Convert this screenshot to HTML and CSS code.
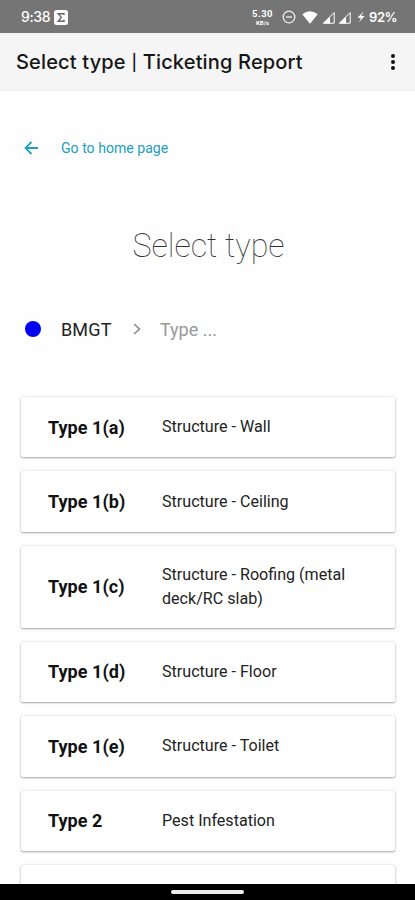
FILE: index.html
```html
<!DOCTYPE html>
<html lang="en">
<head>
<meta charset="utf-8">
<title>Select type | Ticketing Report</title>
<link rel="stylesheet" href="styles.css">
</head>
<body>
<header class="status">
  <span class="clock">9:38</span>
  <svg class="sigma" width="14" height="15" viewBox="0 0 14 15"><rect width="14" height="15" rx="2.5" fill="#fff"/><path d="M10 5V3.7H4.2L7.3 7.4L4.2 11.2H10V9.8" fill="none" stroke="#666" stroke-width="1.4"/></svg>
  <span class="speed"><b>5.30</b><small>KB/s</small></span>
  <svg class="dnd" width="14" height="14" viewBox="0 0 14 14" fill="none" stroke="#eee" stroke-width="1.3"><circle cx="7" cy="7" r="5.8"/><path d="M4 7h6"/></svg>
  <svg class="wifi" width="16" height="13" viewBox="0 0 16 13"><path d="M.3 3.3Q8-2.8 15.7 3.3L8 12.8Z" fill="#fff"/></svg>
  <svg class="signal" width="13" height="13" viewBox="0 0 13 13"><path d="M1.5 12.2L12.2 1.5V12.2Z" fill="none" stroke="#fff"/><path d="M1 12.5L8 5.5V12.5Z" fill="#fff"/></svg>
  <svg class="signal" width="13" height="13" viewBox="0 0 13 13"><path d="M1.5 12.2L12.2 1.5V12.2Z" fill="none" stroke="#fff"/><path d="M1 12.5L8 5.5V12.5Z" fill="#fff"/></svg>
  <svg class="bolt" width="8" height="12" viewBox="0 0 8 12"><path d="M6.5.5L.5 6.8L4 7L1.8 11.5L7.7 5.1L4.2 4.9Z" fill="#fff"/></svg>
  <span class="battery">92%</span>
</header>
<div class="appbar">
  <h1>Select type <span class="bar">|</span> Ticketing Report</h1>
  <svg width="6" height="18" viewBox="0 0 6 18" fill="#111"><circle cx="3" cy="3" r="2"/><circle cx="3" cy="9" r="2"/><circle cx="3" cy="15" r="2"/></svg>
</div>
<main>
  <a class="back">
    <svg width="15" height="14" viewBox="0 0 15 14" fill="none" stroke="#209fbd" stroke-width="1.8"><path d="M14 7H2M7.5 1L1.5 7L7.5 13"/></svg>
    <span>Go to home page</span>
  </a>
  <h2>Select type</h2>
  <nav class="crumbs">
    <i class="dot"></i>
    <span class="group">BMGT</span>
    <svg width="8" height="12" viewBox="0 0 8 12" fill="none" stroke="#888" stroke-width="1.6"><path d="M1 1L6.5 6L1 11"/></svg>
    <span class="current">Type ...</span>
  </nav>
  <section class="list">
    <article class="card"><b>Type 1(a)</b><p>Structure - Wall</p></article>
    <article class="card"><b>Type 1(b)</b><p>Structure - Ceiling</p></article>
    <article class="card tall"><b>Type 1(c)</b><p>Structure - Roofing (metal deck/RC slab)</p></article>
    <article class="card"><b>Type 1(d)</b><p>Structure - Floor</p></article>
    <article class="card"><b>Type 1(e)</b><p>Structure - Toilet</p></article>
    <article class="card"><b>Type 2</b><p>Pest Infestation</p></article>
    <article class="card"></article>
  </section>
</main>
<footer class="navbar"><i></i></footer>
</body>
</html>
```
FILE: styles.css
```css
* { box-sizing: border-box; }
body {
  margin: 0;
  width: 415px;
  height: 900px;
  overflow: hidden;
  display: flex;
  flex-direction: column;
  background: #fefefe;
  color: #222;
  font-family: Roboto, sans-serif;
}
h1, h2, p { margin: 0; font-weight: 400; }
svg { flex: none; display: block; }

.status {
  flex: none;
  height: 33px;
  padding: 1px 18px 0 21px;
  display: flex;
  align-items: center;
  background: #757575;
  color: #fff;
}
.clock { width: 33px; font: 500 14px/16px Inter, sans-serif; letter-spacing: -.4px; }
.speed { margin-left: auto; width: 22px; display: flex; flex-direction: column; align-items: center; }
.speed b { font-size: 9.5px; line-height: 9px; font-weight: 700; letter-spacing: .5px; }
.speed small { font-size: 6px; line-height: 7px; font-weight: 700; margin-top: 1px; }
.dnd { margin-left: 8px; }
.wifi { margin-left: 6px; }
.signal { margin-left: 3.5px; }
.wifi + .signal { margin-left: 4px; }
.bolt { margin: 0 4px 0 6px; }
.battery { width: 28px; font: 600 13px/16px Inter, sans-serif; letter-spacing: -.4px; }

.appbar {
  flex: none;
  height: 58px;
  padding: 0 19px 0 16px;
  display: flex;
  align-items: center;
  justify-content: space-between;
  background: #f5f5f5;
  border-bottom: 1px solid #eee;
}
.appbar h1 { font: 500 20px/28px Inter, sans-serif; letter-spacing: .16px; color: #151515; white-space: nowrap; }
.bar { display: inline-block; width: 6px; font-size: 16px; line-height: 20px; text-align: center; vertical-align: 1px; }

main { flex: 1; min-height: 0; overflow: hidden; }
.back {
  height: 22px;
  margin: 46px 0 0 24px;
  display: flex;
  align-items: center;
  gap: 22px;
  color: #209fbd;
  font-size: 14.1px;
}
h2 {
  margin-top: 66px;
  height: 42px;
  padding-left: 2px;
  text-align: center;
  font-size: 32.3px;
  line-height: 42px;
  font-weight: 100;
  color: #333;
}
.crumbs {
  height: 24px;
  margin: 50px 0 0 25px;
  display: flex;
  align-items: center;
  font-size: 18px;
}
.dot { width: 16px; height: 16px; border-radius: 50%; background: #0000f2; }
.group { width: 72px; margin-left: 20px; letter-spacing: .15px; }
.current { margin-left: 19px; color: #999; }

.list {
  padding: 56px 20px 0 21px;
  display: flex;
  flex-direction: column;
  gap: 14px;
}
.card {
  flex: none;
  height: 60.4px;
  padding: 0 27px 0 27px;
  display: grid;
  grid-template-columns: 114px 1fr;
  align-items: center;
  border-radius: 2px;
  background: #fff;
  box-shadow: 0 1px 2px rgba(0, 0, 0, .3), 0 0 3px rgba(0, 0, 0, .14);
}
.card.tall { height: 82px; }
.card b { font-size: 18px; font-weight: 700; color: #111; letter-spacing: .05px; }
.card p { font-size: 16.1px; line-height: 24px; }

.navbar {
  flex: none;
  height: 16px;
  display: flex;
  align-items: center;
  justify-content: center;
  background: #000;
}
.navbar i { width: 73px; height: 4px; border-radius: 2px; background: #eee; }
```
